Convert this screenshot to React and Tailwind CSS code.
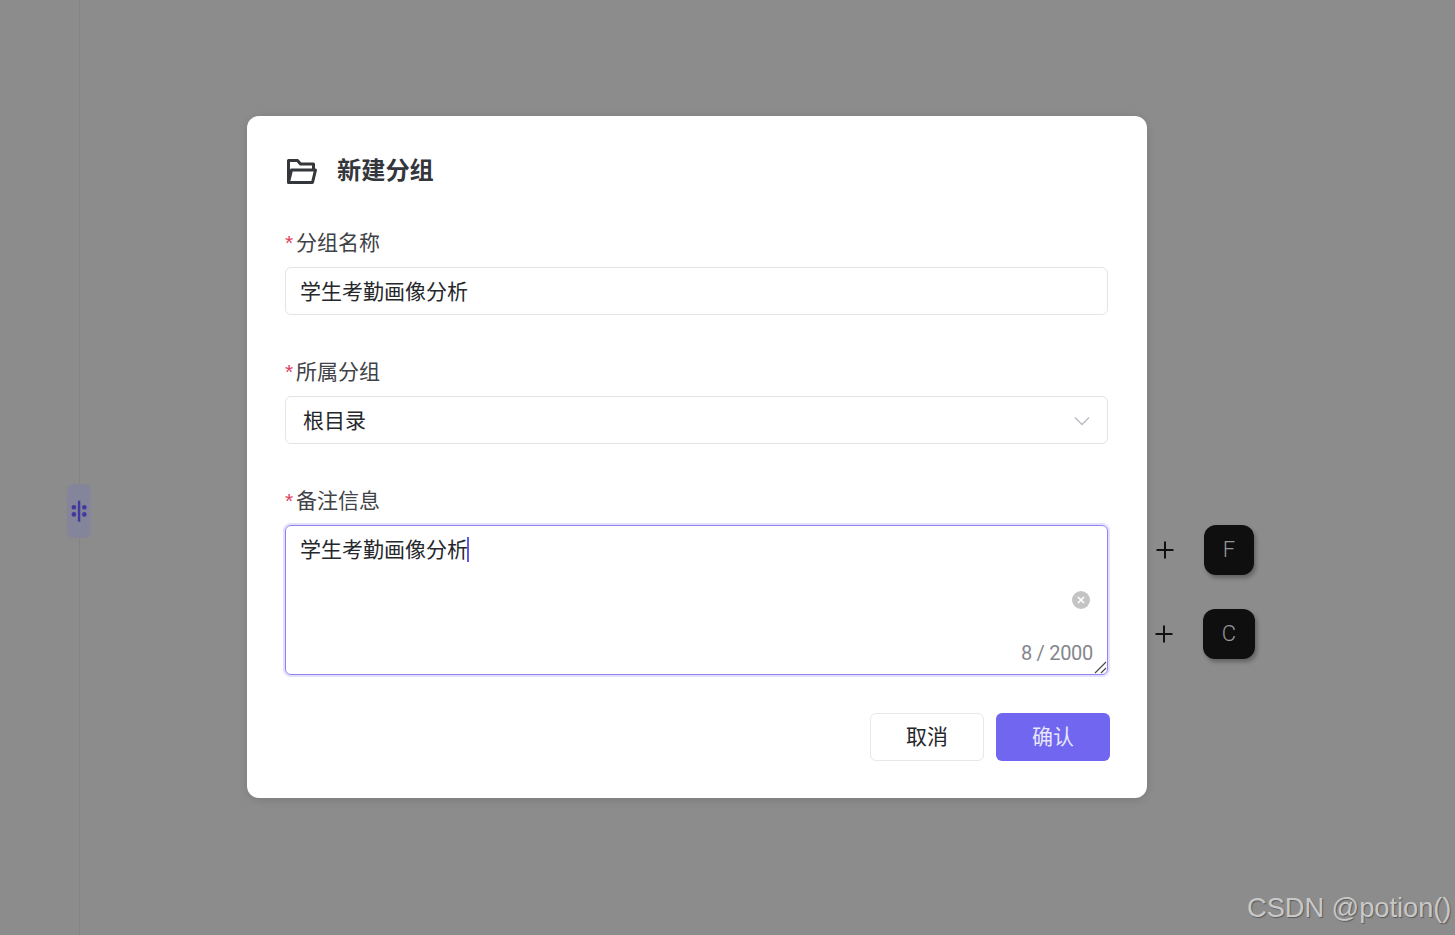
const FONT = "font-['Inter','Noto_Sans_CJK_SC',sans-serif]";

function Field({ label, children, className = "" }) {
  return (
    <div className={className}>
      <div className="flex h-[24px] items-center">
        <span className="h-[24px] w-[11px] text-[21px] leading-[24px] text-[#e0405e] font-['Liberation_Sans',sans-serif]">*</span>
        <span className="text-[21px] leading-[24px] text-[#3f4247]">{label}</span>
      </div>
      <div className="mt-[12px]">{children}</div>
    </div>
  );
}

function Key({ letter, className }) {
  return (
    <div className={`flex items-center gap-[29px] ${className}`}>
      <svg width="20" height="20" viewBox="0 0 20 20" fill="none" stroke="#111" strokeWidth="2">
        <path d="M10 1.5v17M1.5 10h17" />
      </svg>
      <div className="flex h-[50px] flex-1 items-center justify-center rounded-[12px] bg-[#0f0f0f] pb-[2px] font-['Roboto',sans-serif] text-[22px] font-light text-[#969696] shadow-[2px_3px_4px_rgba(0,0,0,0.3)]">
        {letter}
      </div>
    </div>
  );
}

export default function App() {
  return (
    <div className={`relative h-[935px] w-[1455px] overflow-hidden bg-[#8c8c8c] ${FONT}`}>
      {/* dimmed page behind the dialog */}
      <div className="absolute left-[79px] top-0 h-full w-px bg-[#848484]" />
      <div className="absolute left-[67px] top-[484px] flex h-[54px] w-[24px] items-center justify-center rounded-[7px] bg-[#84849a]">
        <svg width="18" height="24" viewBox="0 0 18 24" fill="#44389c">
          <rect x="7.9" y="1.7" width="2.4" height="21" />
          <circle cx="3.9" cy="8.2" r="2.3" />
          <circle cx="3.9" cy="15.4" r="2.3" />
          <circle cx="14.3" cy="8.2" r="2.3" />
          <circle cx="14.3" cy="15.4" r="2.3" />
        </svg>
      </div>
      <div className="absolute left-[1154px] top-[525px] flex w-[101px] flex-col gap-[34px]">
        <Key letter="F" className="pl-[1px] pr-[1px]" />
        <Key letter="C" />
      </div>
      <div className="absolute left-[1247px] top-[891px] whitespace-nowrap font-['Liberation_Sans',sans-serif] text-[27.2px] leading-[34px] text-[#c8c8c8] [text-shadow:1px_1px_1px_rgba(60,60,60,0.6)]">
        CSDN @potion()
      </div>

      {/* dialog */}
      <div className="absolute inset-0 pl-[247px] pt-[116px]">
        <div className="h-[682px] w-[900px] rounded-[12px] bg-white pl-[38px] pr-[39px] pt-[37px] shadow-[0_2px_8px_rgba(0,0,0,0.12)]">
          <div className="flex h-[36px] items-center">
            <svg width="32" height="28" viewBox="0 0 32 28" fill="none" stroke="#33363b" strokeWidth="3" strokeLinejoin="round" className="ml-[1px]">
              <path d="M2.5 25.5V3.5h9l3 3.5h13v5" />
              <path d="M2.5 25.5l3-12.5h24l-3 12.5z" />
            </svg>
            <span className="ml-[19px] text-[24.2px] font-bold leading-[36px] text-[#33363b]">新建分组</span>
          </div>

          <Field label="分组名称" className="mt-[42px]">
            <div className="flex h-[48px] items-center rounded-[6px] border border-[#e3e4e8] pl-[14px] pt-[2px] text-[21px] text-[#25272b]">
              学生考勤画像分析
            </div>
          </Field>

          <Field label="所属分组" className="mt-[45px]">
            <div className="flex h-[48px] items-center justify-between rounded-[6px] border border-[#e3e4e8] pl-[17px] pr-[17px] pt-[1px] text-[21px] text-[#25272b]">
              根目录
              <svg width="16" height="10" viewBox="0 0 16 10" fill="none" stroke="#b9bbc0" strokeWidth="1.4">
                <path d="M1 1.5l7 7 7-7" />
              </svg>
            </div>
          </Field>

          <Field label="备注信息" className="mt-[45px]">
            <div className="relative h-[150px] rounded-[6px] border border-[#8f84f3] pl-[14px] pt-[6px] text-[21px] leading-[30px] text-[#25272b] shadow-[0_0_0_2px_rgba(113,102,240,0.2)]">
              学生考勤画像分析<span className="ml-[-1px] inline-block h-[25px] w-[2px] translate-y-[5px] bg-[#6257ea]" />
              <div className="absolute left-[786px] top-[65px] flex h-[18px] w-[18px] items-center justify-center rounded-full bg-[#c4c4c4]">
                <svg width="8" height="8" viewBox="0 0 8 8" stroke="#fff" strokeWidth="1.7">
                  <path d="M1 1l6 6M7 1l-6 6" />
                </svg>
              </div>
              <div className="absolute right-[14px] top-[113px] font-['Roboto',sans-serif] text-[20px] leading-[28px] tracking-[-0.3px] text-[#85868c]">8 / 2000</div>
              <svg className="absolute bottom-0 right-0" width="14" height="14" viewBox="0 0 14 14" stroke="#444" strokeWidth="1.1">
                <path d="M13 2L2 13M13 8l-5 5" />
              </svg>
            </div>
          </Field>

          <div className="mr-[-2px] mt-[38px] flex justify-end gap-[12px]">
            <div className="flex h-[48px] w-[114px] items-center justify-center rounded-[6px] border border-[#e8e8ec] text-[21px] text-[#25272b]">取消</div>
            <div className="flex h-[48px] w-[114px] items-center justify-center rounded-[6px] bg-[#7166f0] text-[21px] text-[#e8e6fb]">确认</div>
          </div>
        </div>
      </div>
    </div>
  );
}
